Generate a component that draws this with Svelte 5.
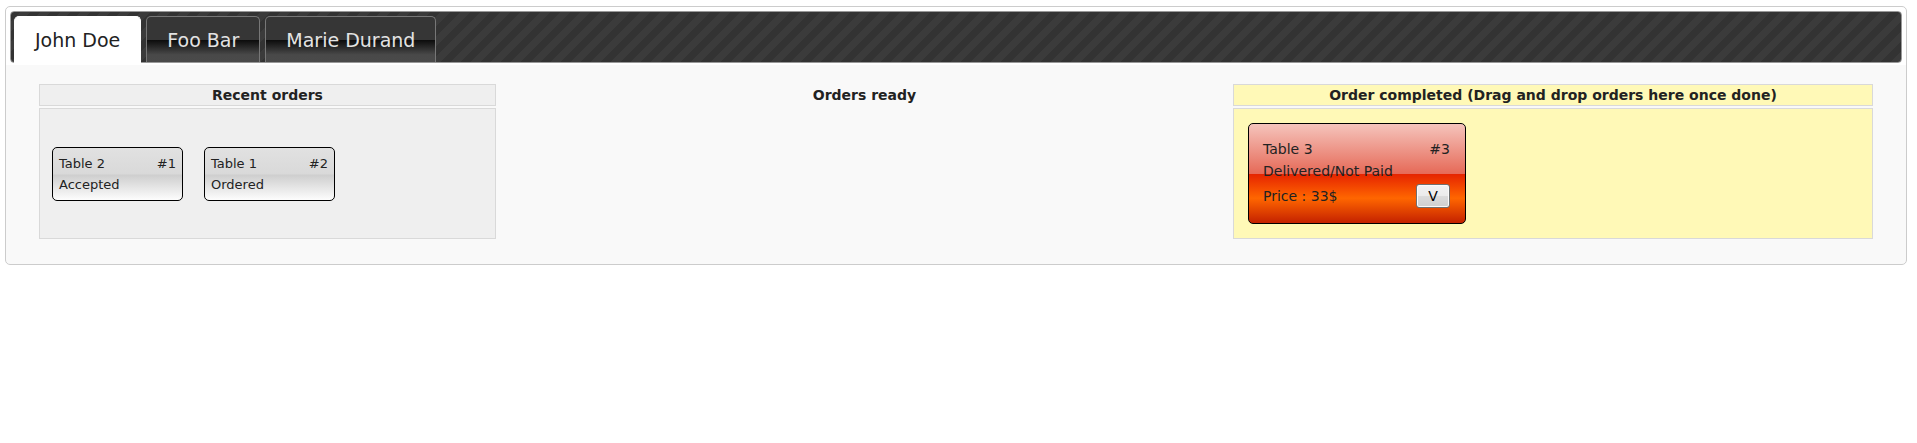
<script>
  let active = $state(0);
  const tabs = ['John Doe', 'Foo Bar', 'Marie Durand'];
  const recent = [
    { id: 1, table: 'Table 2', status: 'Accepted' },
    { id: 2, table: 'Table 1', status: 'Ordered' }
  ];
  const completed = [{ id: 3, table: 'Table 3', status: 'Delivered/Not Paid', price: '33$' }];
</script>

<main class="frame">
  <div class="tabbar" role="tablist">
    {#each tabs as tab, i}
      <button class="tab" class:active={active === i} role="tab" aria-selected={active === i} onclick={() => (active = i)}>{tab}</button>
    {/each}
  </div>
  <div class="board" role="tabpanel">
    <section class="column recent">
      <h2>Recent orders</h2>
      <div class="drop">
        {#each recent as order}
          <article class="card">
            <div class="row"><span>{order.table}</span><span>#{order.id}</span></div>
            <div class="row">{order.status}</div>
          </article>
        {/each}
      </div>
    </section>
    <section class="column ready">
      <h2>Orders ready</h2>
      <div class="drop"></div>
    </section>
    <section class="column completed">
      <h2>Order completed (Drag and drop orders here once done)</h2>
      <div class="drop">
        {#each completed as order}
          <article class="card unpaid">
            <div class="row"><span>{order.table}</span><span>#{order.id}</span></div>
            <div class="row">{order.status}</div>
            <div class="row price"><span>Price : {order.price}</span><button class="validate">V</button></div>
          </article>
        {/each}
      </div>
    </section>
  </div>
</main>

<style>
  :global(body) {
    background: #fff;
    font-family: Verdana, 'DejaVu Sans', sans-serif;
    color: #222;
  }
  .frame {
    box-sizing: border-box;
    margin: 6px 10px 0 5px;
    padding: 4px;
    border: 1px solid #ccc;
    border-radius: 5px;
    background: linear-gradient(#fff 0 58px, #f9f9f9 58px);
  }
  .tabbar {
    display: flex;
    gap: 5px;
    box-sizing: border-box;
    height: 52px;
    padding: 4px 3px 0;
    border: 1px solid #999;
    border-radius: 4px;
    background: linear-gradient(135deg, #333 25%, #3b3b3b 25% 50%, #333 50% 75%, #3b3b3b 75%) 0 0 / 20px 20px;
  }
  .tab {
    height: 46px;
    padding: 0 20px;
    border: 1px solid #777;
    border-bottom: 0;
    border-radius: 5px 5px 0 0;
    background: linear-gradient(#363636 0 50%, #0d0d0d 52%, #494949 84%, #4a4a4a);
    color: #e3e3e3;
    font: 19px/46px Verdana, 'DejaVu Sans', sans-serif;
    white-space: nowrap;
  }
  .tab.active {
    height: 47px;
    border-color: #fff;
    background: #fff;
    color: #222;
  }
  .board {
    display: grid;
    grid-template-columns: 457fr 733fr 640fr;
    gap: 2px;
    padding: 21px 29px;
  }
  .column {
    display: flex;
    flex-direction: column;
    gap: 2px;
    min-width: 0;
  }
  h2 {
    margin: 0;
    border: 1px solid transparent;
    font-size: 14px;
    line-height: 20px;
    text-align: center;
  }
  .drop {
    display: flex;
    align-items: center;
    gap: 21px;
    min-height: 101px;
    padding: 14px 12px;
    border: 1px solid transparent;
  }
  .recent h2,
  .recent .drop {
    border-color: #d9d9d9;
    background: #efefef;
  }
  .completed h2,
  .completed .drop {
    border-color: #d9d9d9;
    background: #fff9b7;
  }
  .completed .drop {
    padding: 14px;
  }
  .card {
    box-sizing: border-box;
    width: 131px;
    padding: 5px 6px;
    border: 1px solid #000;
    border-radius: 5px;
    background: linear-gradient(#e1e1e1, #d9d9d9 50%, #cecece 52%, #fdfdfd);
    font-size: 13px;
    line-height: 21px;
  }
  .row {
    display: flex;
    justify-content: space-between;
    white-space: nowrap;
  }
  .unpaid {
    width: 218px;
    padding: 14px 15px 14px 14px;
    background: linear-gradient(#f5c4bc, #e66a58 50%, #e62500 51%, #ff6600 75%, #c42100);
    font-size: 14px;
    line-height: 22px;
  }
  .price {
    align-items: center;
    height: 27px;
  }
  .validate {
    width: 34px;
    height: 24px;
    padding: 0;
    border: 1px solid #707070;
    border-radius: 3px;
    background: linear-gradient(#f2f2f2, #ebebeb 50%, #dcdcdc 50%, #cfcfcf);
    box-shadow: inset 0 0 0 1px #fafafa;
    color: #000;
    font: 14px/20px Verdana, 'DejaVu Sans', sans-serif;
  }
</style>
